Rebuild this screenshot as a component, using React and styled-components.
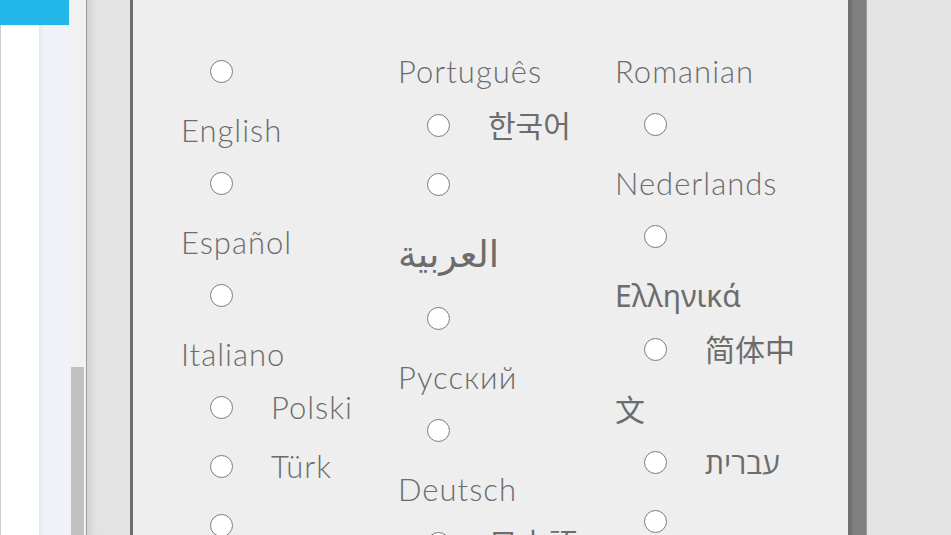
import React from "react";
import styled, { createGlobalStyle } from "styled-components";

const GlobalStyle = createGlobalStyle`
  html, body {
    margin: 0;
    padding: 0;
  }
  body {
    font-family: "Lato", "Noto Sans", sans-serif;
    background: #e3e3e3;
  }
  * {
    box-sizing: border-box;
  }
`;

// fonts used for labels the main face has no glyphs for
const scripts = {
  latin: { family: `"Lato", "Noto Sans", sans-serif`, size: 31, line: 53, weight: 300, spacing: 1 },
  ar: { family: `"DejaVu Sans", sans-serif`, size: 37, line: 75, weight: 400, spacing: 0 },
  el: { family: `"Noto Sans", "Open Sans", sans-serif`, size: 30, line: 53, weight: 400, spacing: 0 },
  ko: { family: `"Noto Sans CJK KR", sans-serif`, size: 30, line: 53, weight: 400, spacing: 0 },
  ja: { family: `"Noto Sans CJK JP", sans-serif`, size: 30, line: 53, weight: 400, spacing: 0 },
  zh: { family: `"Noto Sans CJK SC", sans-serif`, size: 30, line: 53, weight: 400, spacing: 0 },
  he: { family: `"Open Sans", "DejaVu Sans", sans-serif`, size: 30, line: 53, weight: 400, spacing: 0 },
};

const Page = styled.div`
  display: flex;
  height: 100vh;
  overflow: hidden;
`;

const Sidebar = styled.aside`
  width: 69px;
  display: flex;
  flex-direction: column;
`;

const SidebarHeader = styled.div`
  height: 25px;
  background: #21b6e7;
`;

const SidebarBody = styled.div`
  flex: 1;
  display: flex;
  border-left: 1px solid #cdcdcd;
`;

const SidebarMain = styled.div`
  width: 38px;
  background: #ffffff;
`;

const SidebarRail = styled.div`
  flex: 1;
  background: #eff3f7;
  box-shadow: inset 4px 0 4px -2px rgba(0, 0, 0, 0.06);
`;

const ScrollTrack = styled.div`
  width: 17px;
  padding: 0 2px;
  background: #f1f1f1;
  display: flex;
  flex-direction: column;
  justify-content: flex-end;
`;

const ScrollThumb = styled.div`
  height: 168px;
  background: #c1c1c1;
`;

const Backdrop = styled.div`
  flex: 1;
  display: flex;
  padding-left: 43px;
  background: #e3e3e3;
  border-left: 1px solid #9d9d9d;
  box-shadow: inset 10px 0 10px -8px rgba(0, 0, 0, 0.12);
`;

const Modal = styled.div`
  width: 737px;
  display: flex;
  background: #eeeeee;
  border-left: 3px solid #6d6d6d;
`;

const ModalBody = styled.div`
  flex: 1;
  padding: 45px 0 0 48px;
`;

const ScrollRail = styled.div`
  width: 19px;
  background: #808080;
  border-left: 4px solid #707070;
  border-right: 1px solid #9a9a9a;
`;

const LanguageGrid = styled.div`
  display: grid;
  grid-template-columns: repeat(3, 183px);
  column-gap: 34px;
  align-items: start;
  color: #6c6c6c;
  font-size: 31px;
  line-height: 53px;
`;

const Option = styled.div``;

const Radio = styled.input.attrs({ type: "radio" })`
  appearance: none;
  display: inline-block;
  width: 23px;
  height: 23px;
  margin: 0 38px 21px 29px;
  vertical-align: -21px;
  border: 1.5px solid #7b7b7b;
  border-radius: 50%;
  background: #ffffff;
`;

const Label = styled.label`
  font-family: ${({ $script }) => scripts[$script].family};
  font-size: ${({ $script }) => scripts[$script].size}px;
  font-weight: ${({ $script }) => scripts[$script].weight};
  letter-spacing: ${({ $script }) => scripts[$script].spacing}px;
  line-height: ${({ $script }) => scripts[$script].line}px;
  word-break: ${({ $script }) => ($script === "ko" ? "keep-all" : "normal")};
`;

// one list per column; a label whose radio ended the previous column has radio: false
const columns = [
  [
    { id: "en", label: "English" },
    { id: "es", label: "Español" },
    { id: "it", label: "Italiano" },
    { id: "pl", label: "Polski" },
    { id: "tr", label: "Türk" },
    { id: "pt", label: "" },
  ],
  [
    { id: "pt", label: "Português", radio: false },
    { id: "ko", label: "한국어", script: "ko" },
    { id: "ar", label: "العربية", script: "ar" },
    { id: "ru", label: "Русский" },
    { id: "de", label: "Deutsch" },
    { id: "ja", label: "日本語", script: "ja" },
  ],
  [
    { id: "ro", label: "Romanian", radio: false },
    { id: "nl", label: "Nederlands" },
    { id: "el", label: "Ελληνικά", script: "el" },
    { id: "zh", label: "简体中文", script: "zh" },
    { id: "he", label: "עברית", script: "he" },
    { id: "sv", label: "" },
  ],
];

const App = () => {
  return (
    <>
      <GlobalStyle />
      <Page>
        <Sidebar>
          <SidebarHeader />
          <SidebarBody>
            <SidebarMain />
            <SidebarRail />
          </SidebarBody>
        </Sidebar>
        <ScrollTrack>
          <ScrollThumb />
        </ScrollTrack>
        <Backdrop>
          <Modal>
            <ModalBody>
              <LanguageGrid>
                {columns.map((col, i) => (
                  <div key={i}>
                    {col.map((opt, j) => (
                      <Option key={`${opt.id}-${j}`}>
                        {opt.radio !== false && (
                          <Radio name="language" id={`lang-${opt.id}`} />
                        )}
                        {opt.label && (
                          <Label
                            htmlFor={`lang-${opt.id}`}
                            $script={opt.script || "latin"}
                          >
                            {opt.label}
                          </Label>
                        )}
                      </Option>
                    ))}
                  </div>
                ))}
              </LanguageGrid>
            </ModalBody>
            <ScrollRail />
          </Modal>
        </Backdrop>
      </Page>
    </>
  );
};

export default App;
